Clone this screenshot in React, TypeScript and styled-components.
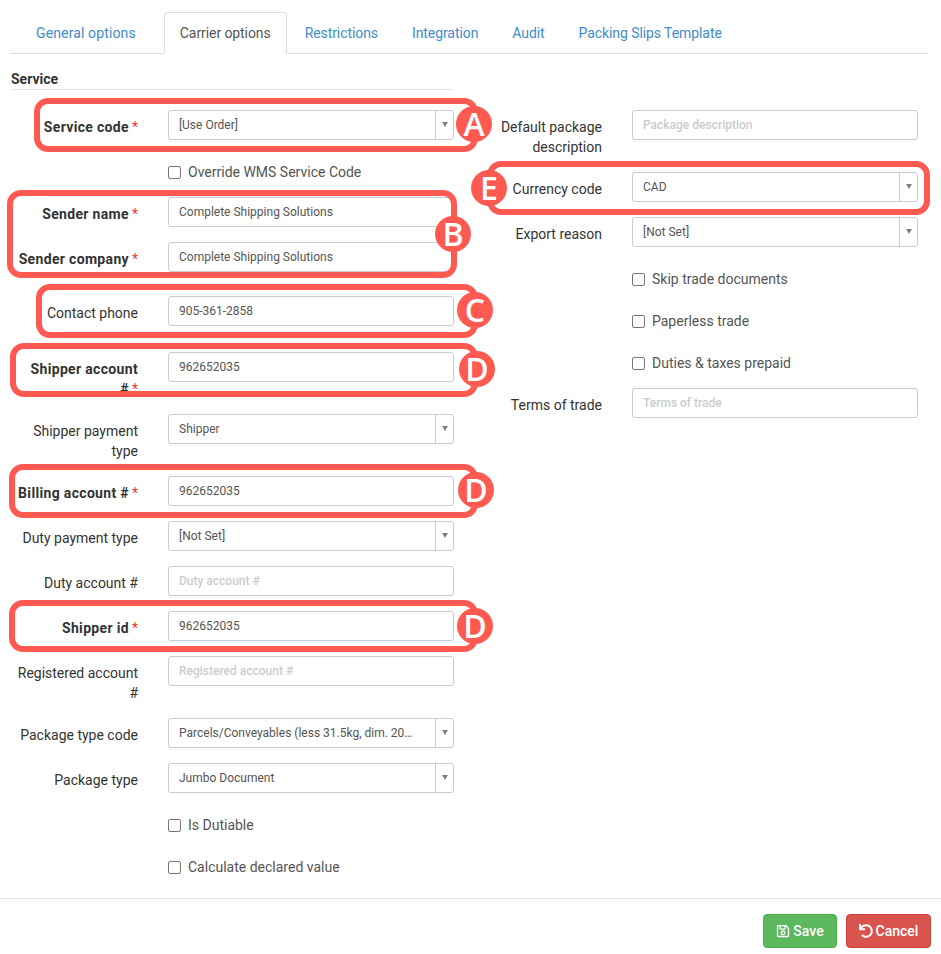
import React from "react";
import styled, { createGlobalStyle } from "styled-components";
import { FaRegSave, FaUndo } from "react-icons/fa";

const Global = createGlobalStyle`
  html, body { margin: 0; padding: 0; background: #fff; }
  body { font-family: Roboto, "Liberation Sans", Arial, sans-serif; font-size: 14px; color: #333; }
  * { box-sizing: border-box; }
`;

const Page = styled.div`
  position: relative;
  width: 941px;
  height: 954px;
  overflow: hidden;
  padding-top: 12px;
`;
const TabBar = styled.div`
  display: flex;
  gap: 2px;
  margin: 0 13px 0 10px;
  height: 42px;
  border-bottom: 1px solid #ddd;
`;
const Tab = styled.a<{ $active?: boolean }>`
  display: block;
  height: 42px;
  padding: 10px 15px 0;
  line-height: 20px;
  font-size: 14px;
  letter-spacing: -0.08px;
  border: 1px solid ${(p) => (p.$active ? "#ddd" : "transparent")};
  border-bottom-color: ${(p) => (p.$active ? "#fff" : "transparent")};
  border-radius: 4px 4px 0 0;
  background: ${(p) => (p.$active ? "#fff" : "transparent")};
  color: ${(p) => (p.$active ? "#555" : "#428bca")};
  &:first-child { margin: 0 10px 0 10px; letter-spacing: 0.13px; }
`;
const Columns = styled.div`
  display: grid;
  grid-template-columns: 444px 444px;
  column-gap: 20px;
  margin-left: 10px;
  height: 844px;
`;
const Column = styled.div`
  display: flex;
  flex-direction: column;
`;
const SectionTitle = styled.div`
  height: 36px;
  padding: 17px 0 0 1px;
  line-height: 17px;
  font-size: 14px;
  font-weight: 700;
  color: #333;
  border-bottom: 1px solid #e5e5e5;
  margin-bottom: 20px;
`;
const RightColumn = styled(Column)`
  padding-top: 56px;
`;
const Row = styled.div<{ $top?: number }>`
  display: grid;
  grid-template-columns: 128px 286px;
  column-gap: 30px;
  margin-top: ${(p) => p.$top ?? 0}px;
  margin-bottom: 15px;
  min-height: 30px;
`;
const Label = styled.label<{ $bold?: boolean }>`
  display: block;
  padding-top: 7px;
  text-align: right;
  line-height: 20px;
  font-size: 14px;
  font-weight: ${(p) => (p.$bold ? 700 : 400)};
  letter-spacing: ${(p) => (p.$bold ? "0.33px" : "0")};
  color: #333;
`;
const Star = styled.span`
  color: #e53935;
  margin-left: 3px;
  font-weight: 400;
  letter-spacing: 0;
`;
const Input = styled.div<{ $placeholder?: boolean }>`
  height: 30px;
  border: 1px solid #ccc;
  border-radius: 3px;
  padding: 0 10px;
  line-height: 28px;
  font-size: 12px;
  color: ${(p) => (p.$placeholder ? "#ccc" : "#555")};
  font-weight: ${(p) => (p.$placeholder ? 500 : 400)};
  background: #fff;
  white-space: nowrap;
  overflow: hidden;
`;
const SelectBox = styled(Input)`
  display: flex;
  padding: 0 0 0 10px;
`;
const SelectText = styled.span`
  flex: 1;
  overflow: hidden;
  text-overflow: ellipsis;
  padding-right: 22px;
`;
const Arrow = styled.span`
  flex: 0 0 18px;
  height: 28px;
  border-left: 1px solid #ccc;
  display: flex;
  align-items: center;
  justify-content: center;
  &::after {
    content: "";
    margin-top: -2px;
    border-left: 3.5px solid transparent;
    border-right: 3.5px solid transparent;
    border-top: 5px solid #808080;
  }
`;
const CheckRow = styled.label`
  display: flex;
  align-items: center;
  height: 27px;
  padding-top: 7px;
  margin: 0 0 15px 158px;
  font-size: 14px;
  line-height: 20px;
  color: #555;
`;
const Box = styled.span`
  width: 13px;
  height: 13px;
  border: 1px solid #767676;
  border-radius: 2px;
  background: #fff;
  margin-right: 7px;
`;
const Footer = styled.div`
  position: absolute;
  left: 0;
  right: 0;
  top: 898px;
  height: 56px;
  border-top: 1px solid #e5e5e5;
  display: flex;
  justify-content: flex-end;
  align-items: flex-start;
  gap: 9px;
  padding: 15px 10px 0 0;
`;
const Button = styled.button<{ $bg: string; $edge: string; $w: number }>`
  display: flex;
  align-items: center;
  justify-content: center;
  gap: 3px;
  width: ${(p) => p.$w}px;
  height: 34px;
  padding: 0;
  font: 500 14px Roboto, "Liberation Sans", Arial, sans-serif;
  color: #fff;
  background: ${(p) => p.$bg};
  border: 1px solid ${(p) => p.$edge};
  border-radius: 4px;
  svg { width: 14px; height: 14px; }
`;
const Callout = styled.div<{ $x: number; $y: number; $w: number; $h: number }>`
  position: absolute;
  left: ${(p) => p.$x}px;
  top: ${(p) => p.$y}px;
  width: ${(p) => p.$w}px;
  height: ${(p) => p.$h}px;
  border: 6px solid #ff5a52;
  border-radius: 14px;
  pointer-events: none;
`;
const Badge = styled.div<{ $x: number; $y: number }>`
  position: absolute;
  left: ${(p) => p.$x - 18}px;
  top: ${(p) => p.$y - 18}px;
  width: 36px;
  height: 36px;
  border-radius: 50%;
  background: #ff5a52;
  color: #fff;
  font: 600 32px/36px "Open Sans", Roboto, sans-serif;
  text-align: center;
`;

type F = { label: string; value?: string; ph?: string; select?: boolean; bold?: boolean; req?: boolean; top?: number } | { check: string };

const left: F[] = [
  { label: "Service code", value: "[Use Order]", select: true, bold: true, req: true },
  { check: "Override WMS Service Code" },
  { label: "Sender name", value: "Complete Shipping Solutions", bold: true, req: true },
  { label: "Sender company", value: "Complete Shipping Solutions", bold: true, req: true },
  { label: "Contact phone", value: "905-361-2858", top: 9 },
  { label: "Shipper account #", value: "962652035", bold: true, req: true, top: 11 },
  { label: "Shipper payment type", value: "Shipper", select: true },
  { label: "Billing account #", value: "962652035", bold: true, req: true },
  { label: "Duty payment type", value: "[Not Set]", select: true },
  { label: "Duty account #", ph: "Duty account #" },
  { label: "Shipper id", value: "962652035", bold: true, req: true },
  { label: "Registered account #", ph: "Registered account #" },
  { label: "Package type code", value: "Parcels/Conveyables (less 31.5kg, dim. 20x30x40cm)", select: true },
  { label: "Package type", value: "Jumbo Document", select: true },
  { check: "Is Dutiable" },
  { check: "Calculate declared value" },
];
const right: F[] = [
  { label: "Default package description", ph: "Package description" },
  { label: "Currency code", value: "CAD", select: true },
  { label: "Export reason", value: "[Not Set]", select: true },
  { check: "Skip trade documents" },
  { check: "Paperless trade" },
  { check: "Duties & taxes prepaid" },
  { label: "Terms of trade", ph: "Terms of trade" },
];

const Field = ({ f }: { f: F }) => {
  if ("check" in f)
    return (
      <CheckRow>
        <Box />
        {f.check}
      </CheckRow>
    );
  return (
    <Row $top={f.top}>
      <Label $bold={f.bold}>
        {f.label}
        {f.req && <Star>*</Star>}
      </Label>
      {f.select ? (
        <SelectBox>
          <SelectText>{f.value}</SelectText>
          <Arrow />
        </SelectBox>
      ) : (
        <Input $placeholder={!!f.ph}>{f.value ?? f.ph}</Input>
      )}
    </Row>
  );
};

const callouts = [
  { x: 34, y: 98, w: 444, h: 54 },
  { x: 7, y: 190, w: 450, h: 88 },
  { x: 36, y: 284, w: 442, h: 54 },
  { x: 10, y: 343, w: 468, h: 54 },
  { x: 9, y: 464, w: 469, h: 54 },
  { x: 9, y: 600, w: 469, h: 52 },
  { x: 487, y: 161, w: 443, h: 54 },
];
const badges = [
  { t: "A", x: 474, y: 124 },
  { t: "B", x: 453, y: 234 },
  { t: "C", x: 475, y: 310 },
  { t: "D", x: 477, y: 369 },
  { t: "D", x: 476, y: 490 },
  { t: "D", x: 475, y: 626 },
  { t: "E", x: 489, y: 188 },
];

export default function App() {
  return (
    <Page>
      <Global />
      <TabBar>
        <Tab>General options</Tab>
        <Tab $active>Carrier options</Tab>
        <Tab>Restrictions</Tab>
        <Tab>Integration</Tab>
        <Tab>Audit</Tab>
        <Tab>Packing Slips Template</Tab>
      </TabBar>
      <Columns>
        <Column>
          <SectionTitle>Service</SectionTitle>
          {left.map((f, i) => (
            <Field key={i} f={f} />
          ))}
        </Column>
        <RightColumn>
          {right.map((f, i) => (
            <Field key={i} f={f} />
          ))}
        </RightColumn>
      </Columns>
      <Footer>
        <Button $bg="#5cb85c" $edge="#4cae4c" $w={74}>
          <FaRegSave /> Save
        </Button>
        <Button $bg="#d9534f" $edge="#d43f3a" $w={85}>
          <FaUndo /> Cancel
        </Button>
      </Footer>
      {callouts.map((c, i) => (
        <Callout key={i} $x={c.x} $y={c.y} $w={c.w} $h={c.h} />
      ))}
      {badges.map((b, i) => (
        <Badge key={i} $x={b.x} $y={b.y}>
          {b.t}
        </Badge>
      ))}
    </Page>
  );
}
